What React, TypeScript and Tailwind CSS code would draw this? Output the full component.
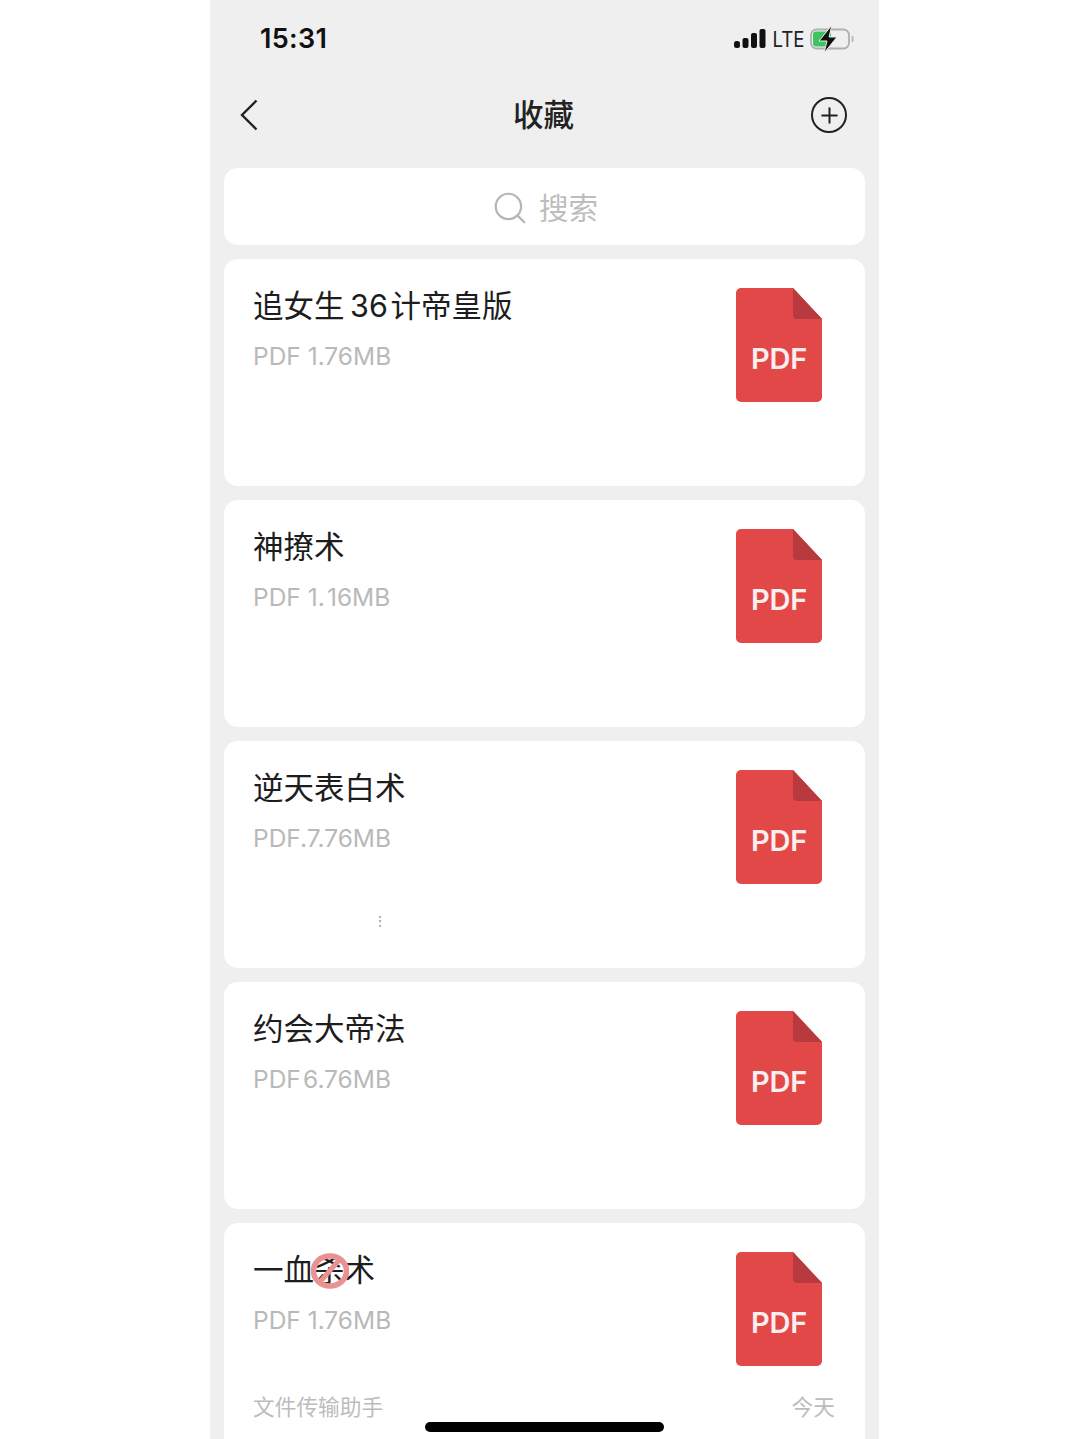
import { Plus, Search } from "lucide-react";

const files = [
  { title: "追女生\u200936\u200a计帝皇版", meta: "PDF 1.76MB" },
  { title: "神撩术", meta: "PDF 1.\u200a16MB" },
  { title: "逆天表白术", meta: "PDF.7.76MB", dots: true },
  { title: "约会大帝法", meta: "PDF\u200a6.76MB" },
];

function PdfIcon() {
  return (
    <div className="relative mr-[14px] h-[114px] w-[86px] shrink-0">
      <svg viewBox="0 0 86 114" className="block h-full w-full">
        <path d="M5 0H57L86 31V109a5 5 0 0 1-5 5H5a5 5 0 0 1-5-5V5a5 5 0 0 1 5-5Z" fill="#e24848" />
        <path d="M57 0L86 31H61a4 4 0 0 1-4-4Z" fill="#b83a3e" />
      </svg>
      <span className="absolute left-0 right-0 top-[53px] text-center text-[29px] leading-[36px] font-semibold tracking-[-0.3px] text-[#fbeeee]">PDF</span>
    </div>
  );
}

function FileCard({ title, meta, dots }: { title: string; meta: string; dots?: boolean }) {
  return (
    <div className="relative flex h-[227px] justify-between rounded-[14px] bg-white pl-[29px] pr-[29px] pt-[29px]">
      <div>
        <p className="-mt-[1px] text-[30.5px] leading-[38px] text-[#1d1d1d]">{title}</p>
        <p className="mt-[15px] text-[24.5px] leading-[32px] text-[#b9b9b9]">{meta}</p>
        {dots && <p className="mt-[60px] ml-[121px] text-[12px] leading-[14px] text-[#888]">⋮</p>}
      </div>
      <PdfIcon />
    </div>
  );
}

export default function App() {
  return (
    <div className="min-h-[1439px] bg-white pl-[210px] font-['Inter','Noto_Sans_CJK_SC',sans-serif]">
      <div className="relative h-[1439px] w-[669px] overflow-hidden bg-[#efefef]">
        {/* status bar */}
        <div className="flex h-[76px] items-center justify-between pl-[50px] pr-[25px] pt-[1px]">
          <span className="text-[27px] font-semibold leading-[34px] tracking-[0.3px] text-[#111]">15:31</span>
          <div className="flex items-center">
            <svg width="32" height="20" viewBox="0 0 32 20">
              <rect x="0" y="12" width="6" height="7" rx="2.5" fill="#111" />
              <rect x="8.5" y="9" width="6" height="10" rx="2" fill="#111" />
              <rect x="17" y="4" width="6" height="15" rx="2" fill="#111" />
              <rect x="25.5" y="0" width="6" height="19" rx="2" fill="#111" />
            </svg>
            <span className="ml-[4px] w-[33px] origin-center scale-x-[0.85] text-center text-[22px] leading-[24px] text-[#222]">LTE</span>
            <svg className="ml-[7px]" width="44" height="28" viewBox="0 0 44 28">
              <rect x="1" y="4.5" width="38" height="19" rx="5.5" fill="none" stroke="#b0b0b0" strokeWidth="1.8" />
              <rect x="3" y="6.5" width="18" height="15" rx="3" fill="#3fc35f" />
              <path d="M42.5 11v6" stroke="#bbb" strokeWidth="2" />
              <path d="M22 0L9 16h8l-3 12 13-16h-8Z" fill="#111" stroke="#efefef" strokeWidth="1" />
            </svg>
          </div>
        </div>

        {/* nav */}
        <div className="grid h-[78px] grid-cols-[1fr_auto_1fr] items-center pl-[30px] pr-[32px]">
          <svg width="18" height="32" viewBox="0 0 18 32" className="text-[#222]">
            <path d="M16.5 1.5L2 16l14.5 14.5" fill="none" stroke="currentColor" strokeWidth="2.4" />
          </svg>
          <h1 className="text-[30.5px] font-medium leading-[38px] text-[#222]">收藏</h1>
          <div className="flex h-[36px] w-[36px] items-center justify-center justify-self-end rounded-full border-2 border-[#222]">
            <Plus size={25} strokeWidth={1.9} className="text-[#222]" />
          </div>
        </div>

        <div className="flex flex-col gap-[14px] px-[14px] pt-[14px]">
          <div className="flex h-[77px] items-center justify-center gap-[10px] rounded-[14px] bg-white pt-[3px]">
            <Search size={38} strokeWidth={1.4} className="text-[#b5b5b5]" />
            <span className="text-[29.5px] leading-[36px] text-[#bdbdbd]">搜索</span>
          </div>

          {files.map((file) => (
            <FileCard key={file.title} {...file} />
          ))}

          <div className="relative h-[260px] rounded-[14px] bg-white px-[29px] pt-[29px]">
            <div className="flex justify-between">
              <div>
                <p className="relative -mt-[1px] text-[30.5px] leading-[38px] text-[#1d1d1d]">
                  一血杀术
                  <svg className="absolute left-[58px] top-[1px]" width="38" height="38" viewBox="0 0 38 38">
                    <ellipse cx="19" cy="19" rx="16.5" ry="15" fill="none" stroke="#e89292" strokeWidth="5.5" />
                    <path d="M8 31L29 7" stroke="#e89292" strokeWidth="5" />
                  </svg>
                </p>
                <p className="mt-[15px] text-[24.5px] leading-[32px] text-[#b9b9b9]">PDF 1.76MB</p>
              </div>
              <PdfIcon />
            </div>
            <div className="mt-[26px] flex justify-between pr-[1px] text-[21.7px] leading-[30px] text-[#bcbcbc]">
              <span>文件传输助手</span>
              <span>今天</span>
            </div>
          </div>
        </div>

        {/* home indicator */}
        <div className="absolute bottom-[7px] left-[215px] h-[10px] w-[239px] rounded-full bg-black" />
      </div>
    </div>
  );
}
